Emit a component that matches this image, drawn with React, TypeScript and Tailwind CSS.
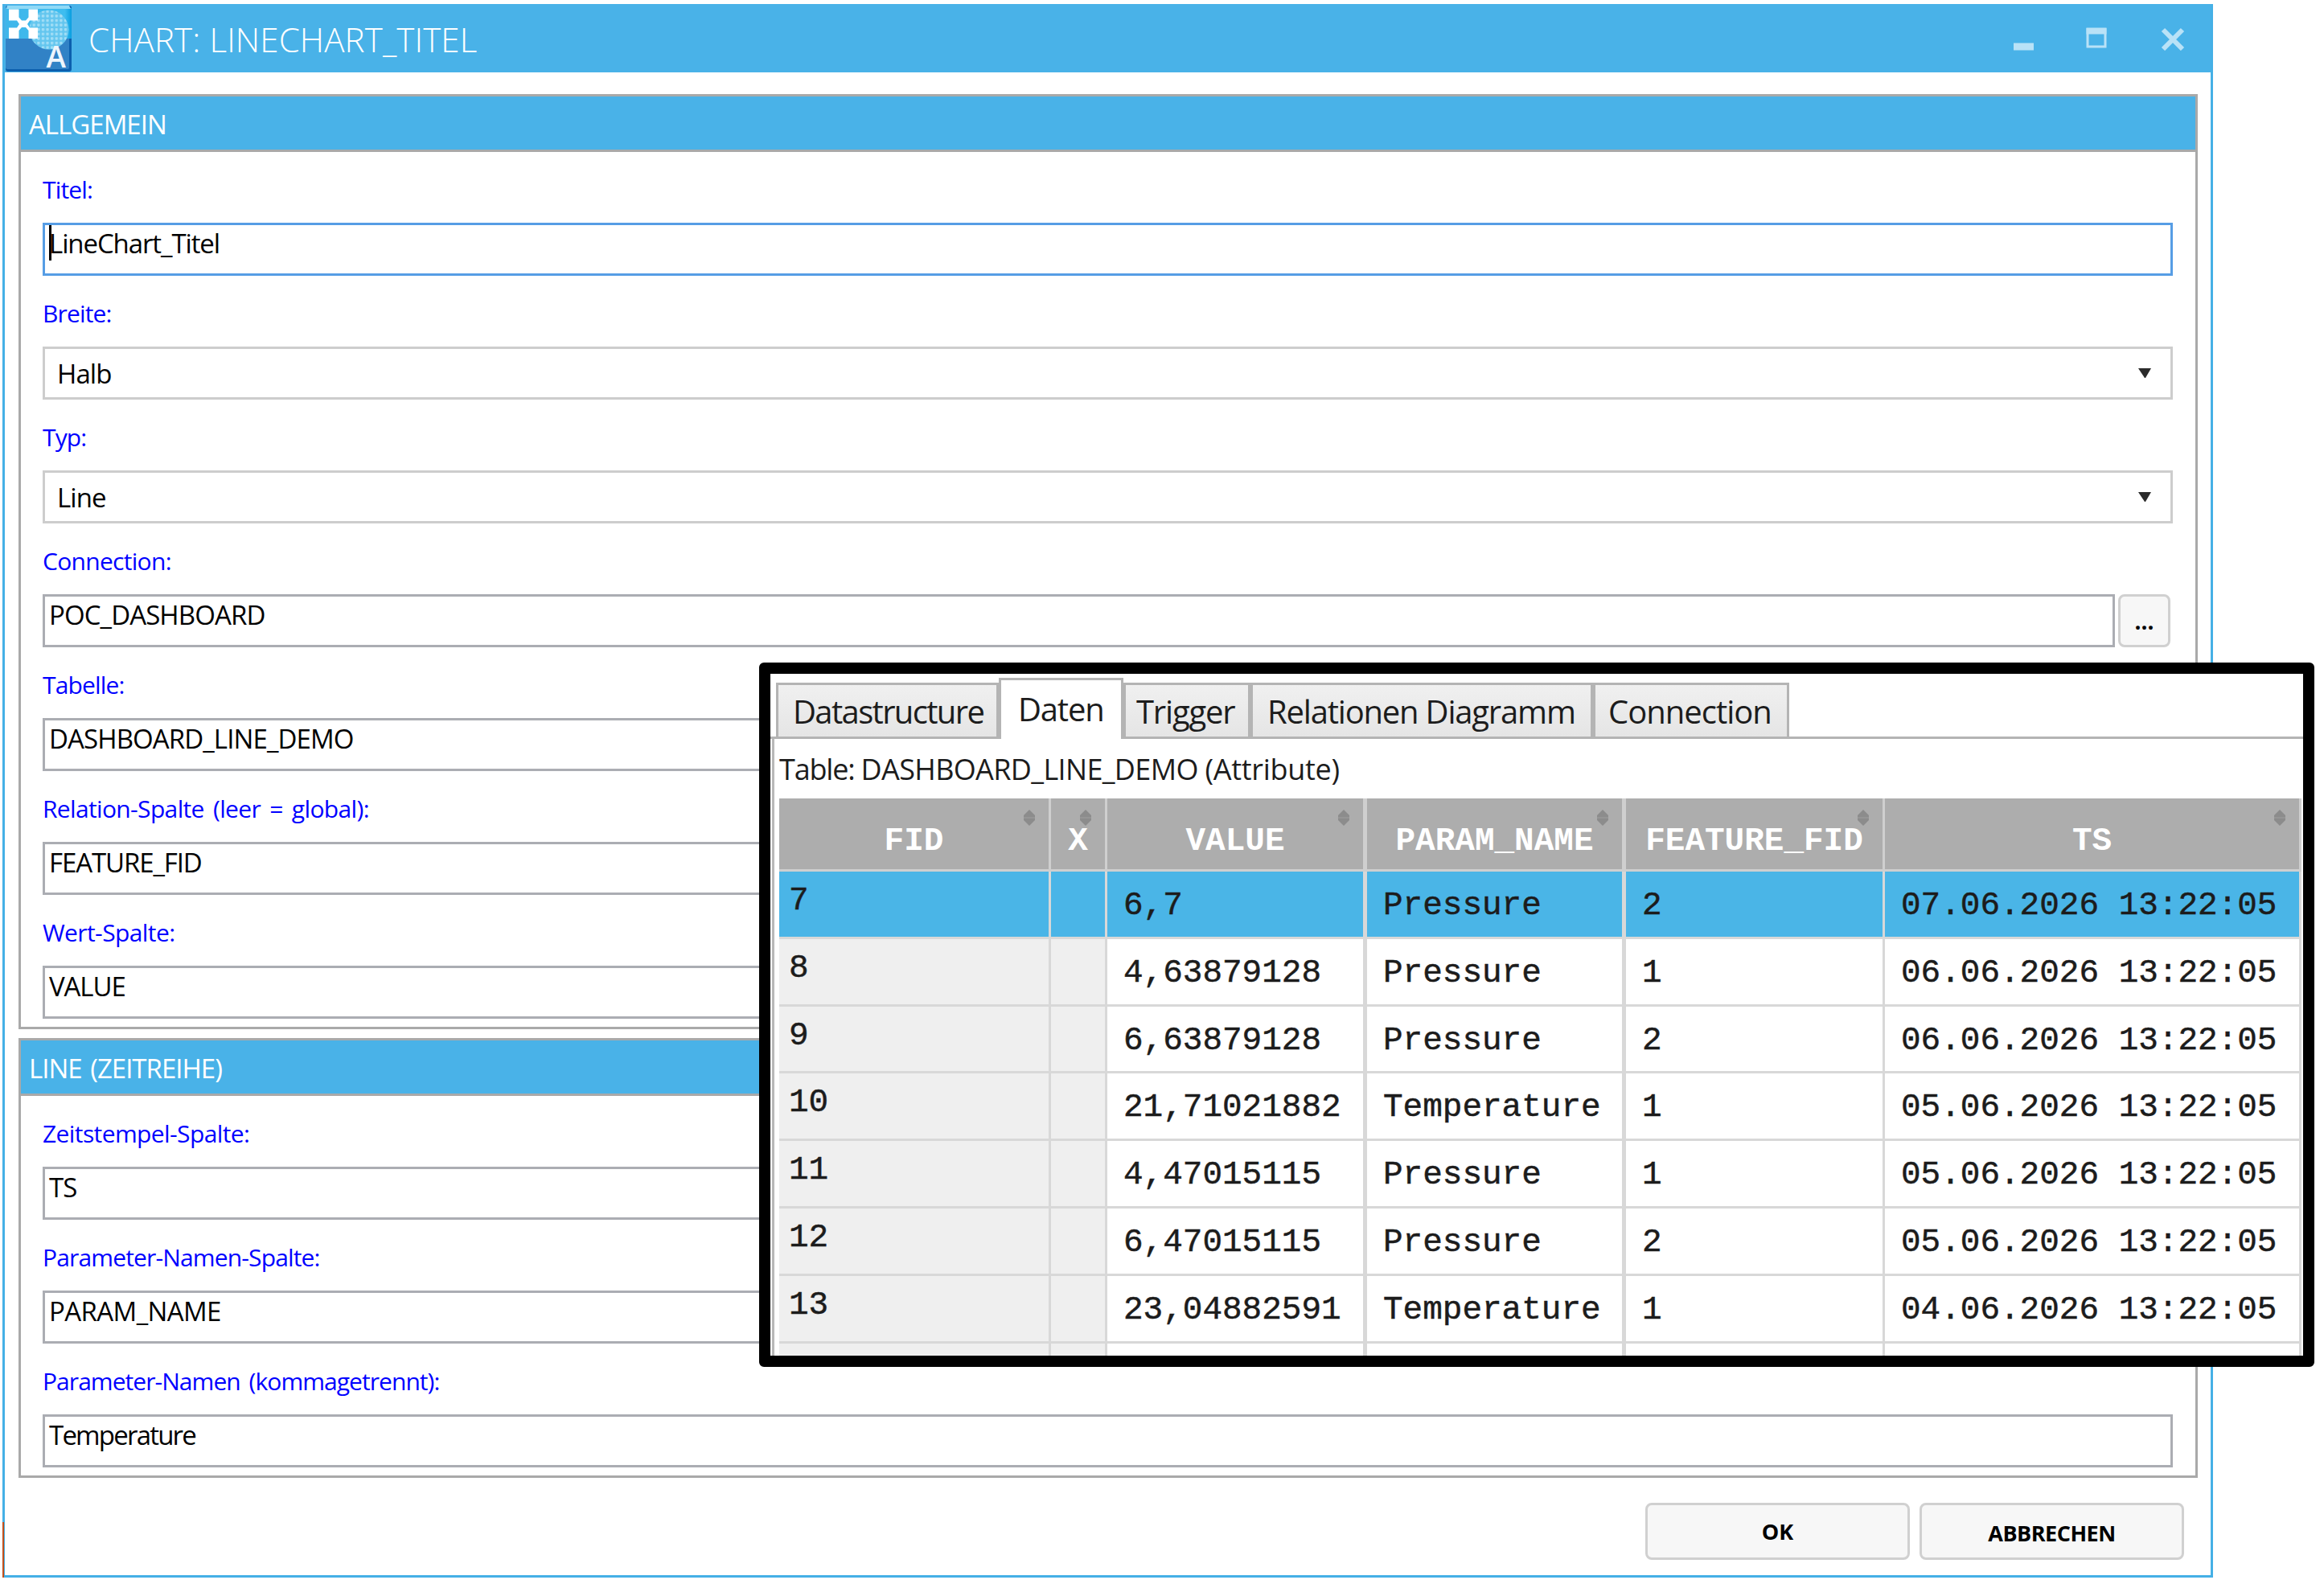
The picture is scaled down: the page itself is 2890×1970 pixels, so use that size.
import type { ReactNode } from "react";
import clsx from "clsx";

type Field = {
  label: string;
  value: string;
  kind?: "text" | "select" | "browse";
  focused?: boolean;
  tracking?: string;
  labelTracking?: string;
};

const GENERAL_FIELDS: Field[] = [
  { label: "Titel:", value: "LineChart_Titel", focused: true, tracking: "tracking-[-1.1px]" },
  { label: "Breite:", value: "Halb", kind: "select" },
  { label: "Typ:", value: "Line", kind: "select" },
  { label: "Connection:", value: "POC_DASHBOARD", kind: "browse", labelTracking: "tracking-[-0.7px]" },
  { label: "Tabelle:", value: "DASHBOARD_LINE_DEMO" },
  {
    label: "Relation-Spalte (leer = global):",
    value: "FEATURE_FID",
    tracking: "tracking-[-1.1px]",
    labelTracking: "tracking-[-0.65px]",
  },
  { label: "Wert-Spalte:", value: "VALUE", tracking: "tracking-[-1.1px]", labelTracking: "tracking-[-0.6px]" },
];

const LINE_FIELDS: Field[] = [
  { label: "Zeitstempel-Spalte:", value: "TS", labelTracking: "tracking-[-0.6px]" },
  { label: "Parameter-Namen-Spalte:", value: "PARAM_NAME", tracking: "tracking-[-0.6px]" },
  {
    label: "Parameter-Namen (kommagetrennt):",
    value: "Temperature",
    tracking: "tracking-[-1.8px]",
    labelTracking: "tracking-[-0.95px]",
  },
];

const TABS = [
  { label: "Datastructure", className: "w-[277px] pl-[18px] tracking-[-1.65px]" },
  { label: "Daten", className: "w-[155px] pl-[21px] tracking-[-1.2px]", active: true },
  { label: "Trigger", className: "w-[158px] pl-[13px] tracking-[-1.2px]" },
  { label: "Relationen Diagramm", className: "w-[426px] pl-[18px] tracking-[-1.2px]" },
  { label: "Connection", className: "w-[244px] pl-[16px] tracking-[-1px]" },
];

const COLUMNS = ["FID", "X", "VALUE", "PARAM_NAME", "FEATURE_FID", "TS"];

const ROWS = [
  ["7", "", "6,7", "Pressure", "2", "07.06.2026 13:22:05"],
  ["8", "", "4,63879128", "Pressure", "1", "06.06.2026 13:22:05"],
  ["9", "", "6,63879128", "Pressure", "2", "06.06.2026 13:22:05"],
  ["10", "", "21,71021882", "Temperature", "1", "05.06.2026 13:22:05"],
  ["11", "", "4,47015115", "Pressure", "1", "05.06.2026 13:22:05"],
  ["12", "", "6,47015115", "Pressure", "2", "05.06.2026 13:22:05"],
  ["13", "", "23,04882591", "Temperature", "1", "04.06.2026 13:22:05"],
  ["", "", "", "", "", ""],
];

const GRID = "grid grid-cols-[338px_70px_323px_322px_322px_518px]";

// the VALUE and PARAM_NAME columns have a slightly thicker separator
const separator = (c: number) => (c === 2 || c === 3 ? "border-r-5" : "border-r-3");

function AppLogo() {
  return (
    <svg className="h-[82px] w-[82px] overflow-visible" viewBox="0 0 82 82">
      <defs>
        <linearGradient id="sky" x1="0" y1="0" x2="1" y2="0">
          <stop offset="0" stopColor="#3fb6ea" />
          <stop offset="0.9" stopColor="#3dbdf0" />
          <stop offset="1" stopColor="#089ee0" />
        </linearGradient>
        <pattern id="mesh" width="5.6" height="5.6" patternUnits="userSpaceOnUse">
          <rect width="5.6" height="5.6" fill="#63c6ef" />
          <rect width="3.4" height="3.4" rx="1" fill="#a2def6" />
        </pattern>
      </defs>
      <rect width="82" height="82" rx="3" fill="#0c5fae" />
      <rect width="79" height="79" rx="2" fill="#3182c6" />
      <path d="M0 3h82v38H0z" fill="url(#sky)" />
      <path d="M2 0h77l2 4H1z" fill="#8fd9f6" />
      <circle cx="54" cy="30" r="24.500" fill="url(#mesh)" />
      <path
        d="M4 4.500h12.500v10l3.500 4h5l3.500-4v-10H40v14H30l-3 4.500 3 4.500h10V41H28.500V31l-3.500-4h-5l-3.500 4v10H4V27.500h10l3-4.500-3-4.500H4z"
        fill="#fff"
      />
      <text x="50.500" y="77" fill="#eef5fc" fontFamily="Open Sans, sans-serif" fontSize="37" fontWeight="600">
        A
      </text>
    </svg>
  );
}

function SortIcon() {
  return (
    <svg className="absolute top-[14px] right-[16px] h-5 w-4" viewBox="0 0 16 20">
      <path d="M8 0l7 7v6l-7 7-7-7V7z" fill="#8c8c8c" />
      <path d="M1 10h14" stroke="#989898" strokeWidth="1.5" />
    </svg>
  );
}

function FieldRow({
  label,
  value,
  kind = "text",
  focused,
  tracking = "tracking-[-0.9px]",
  labelTracking = "tracking-[-0.85px]",
}: Field) {
  return (
    <div>
      <div
        className={clsx("h-[88px] pt-[5px] text-[30px] leading-[83px] text-[#0000ff] [word-spacing:4px]", labelTracking)}
      >
        {label}
      </div>
      <div className="flex gap-1">
        <div
          className={clsx(
            "flex h-[66px] flex-1 justify-between border-3 text-[33px]",
            kind === "select" && "border-[#cdcdcd] pl-[15px] leading-[62px]",
            kind !== "select" && "pl-[5px] leading-[46px]",
            kind !== "select" && (focused ? "border-[#569de5]" : "border-[#abadb3]"),
          )}
        >
          <span className={clsx("relative", tracking)}>
            {focused && <span className="absolute top-0 left-0 h-11 w-[3px] bg-black" />}
            {value}
          </span>
          {kind === "select" && (
            <svg className="mt-6 mr-6 h-3 w-4" viewBox="0 0 16 12">
              <path d="M0 0h16L9 12H8z" fill="#2b2b2b" />
            </svg>
          )}
        </div>
        {kind === "browse" && (
          <button className="mr-[3px] h-[66px] w-[65px] rounded-lg border-3 border-[#d0d0d0] bg-[#f7f7f7] text-[28px] leading-[56px] font-bold">
            ...
          </button>
        )}
      </div>
    </div>
  );
}

function Section({ title, fields }: { title: string; fields: Field[] }) {
  return (
    <section className="border-3 border-[#a9a9a9] pb-[10px]">
      <h2 className="h-[69px] border-b-3 border-[#a9a9a9] bg-[#49b2e8] pl-[10px] text-[33px] leading-[69px] tracking-[-1px] text-white [word-spacing:3px]">
        {title}
      </h2>
      <div className="pr-7 pl-[27px]">
        {fields.map((field) => (
          <FieldRow key={field.label} {...field} />
        ))}
      </div>
    </section>
  );
}

function DialogButton({ children, className }: { children: ReactNode; className?: string }) {
  return (
    <button
      className={clsx(
        "h-[71px] w-[329px] rounded-lg border-3 border-[#d0d0d0] bg-[#f7f7f7] text-[27px] font-bold",
        className,
      )}
    >
      {children}
    </button>
  );
}

function TableWindow() {
  return (
    <div className="absolute top-[824px] left-[944px] h-[876px] w-[1934px] overflow-hidden rounded-md border-14 border-black bg-white text-[#1c1c1c]">
      <div className="flex h-[81px] items-end border-b-3 border-[#b4b4b4] pl-[7px]">
        {TABS.map((tab) => (
          <div
            key={tab.label}
            className={clsx(
              "shrink-0 border-3 border-[#b4b4b4] text-[40px]",
              tab.active
                ? "-mb-[3px] h-[76px] border-b-0 bg-white leading-[72px]"
                : "h-[67px] border-b-0 bg-linear-to-b from-[#f0f0f0] to-[#e5e5e5] leading-[65px]",
              tab.className,
            )}
          >
            {tab.label}
          </div>
        ))}
      </div>
      <div className="ml-[2px] border-l-3 border-[#b8b8b8] pl-[6px]">
        <div className="h-[74px] text-[36px] leading-[76px] tracking-[-0.65px]">
          <span className="tracking-[-1.2px]">Table: </span>
          DASHBOARD_LINE_DEMO <span className="tracking-[-0.3px]">(Attribute)</span>
        </div>
        <div className="w-[1893px] font-['Liberation_Mono',monospace] text-[41px]">
          <div className={clsx(GRID, "grid-rows-[91px] bg-[#adadad] font-bold text-white")}>
            {COLUMNS.map((col, c) => (
              <div
                key={col}
                className={clsx(
                  "relative border-b-3 border-[#cfcfcf] pt-[6px] text-center leading-[94px]",
                  separator(c),
                )}
              >
                {col}
                <SortIcon />
              </div>
            ))}
          </div>
          {ROWS.map((row, r) => (
            <div key={r} className={clsx(GRID, "grid-rows-[83.8px]", r === 0 && "bg-[#4ab5e7]")}>
              {row.map((cell, c) => (
                <div
                  key={c}
                  className={clsx(
                    "border-b-3 border-[#d8d8d8] whitespace-pre [-webkit-text-stroke:0.5px_#1c1c1c]",
                    separator(c),
                    c < 2 ? "pl-3 leading-[73px]" : "pl-5 leading-[85px]",
                    c < 2 && r > 0 && "bg-[#efefef]",
                  )}
                >
                  {cell}
                </div>
              ))}
            </div>
          ))}
        </div>
      </div>
    </div>
  );
}

export default function App() {
  return (
    <div className="relative h-[1970px] w-[2890px] overflow-hidden bg-white pt-[5px] pl-[3px] font-['Open_Sans',sans-serif] text-black">
      <div className="relative flex h-[1957px] w-[2749px] flex-col border-3 border-t-0 border-[#45b0e6] bg-white">
        <header className="flex h-[85px] shrink-0 items-center bg-[#49b2e8] pl-[1px]">
          <AppLogo />
          <h1 className="ml-[21px] pt-[2px] text-[42px] leading-[87px] font-light tracking-[0.15px] text-white">
            CHART: LINECHART_TITEL
          </h1>
          <svg className="mt-[2px] mr-8 ml-auto h-[29px] w-[214px]" viewBox="0 0 214 29" fill="none" stroke="#b9e2f7">
            <path d="M1 24h25" strokeWidth="9" />
            <path d="M93 1v23h22V1" strokeWidth="3" />
            <path d="M91.500 4.500h25" strokeWidth="8" />
            <path d="M187 3l24 24M211 3l-24 24" strokeWidth="6" />
          </svg>
        </header>
        <main className="flex flex-col gap-[11px] pt-[27px] pr-4 pl-[17px]">
          <Section title="ALLGEMEIN" fields={GENERAL_FIELDS} />
          <Section title="LINE (ZEITREIHE)" fields={LINE_FIELDS} />
        </main>
        <footer className="mt-[31px] flex justify-end gap-3 pr-[33px]">
          <DialogButton className="pt-[1px]">OK</DialogButton>
          <DialogButton className="pt-[5px] tracking-[-0.5px]">ABBRECHEN</DialogButton>
        </footer>
        {/* sliver of the window behind, visible at the lower left edge */}
        <div className="absolute -bottom-[3px] -left-[3px] h-[69px] w-[2px] bg-[#c4501b]" />
      </div>
      <TableWindow />
    </div>
  );
}
